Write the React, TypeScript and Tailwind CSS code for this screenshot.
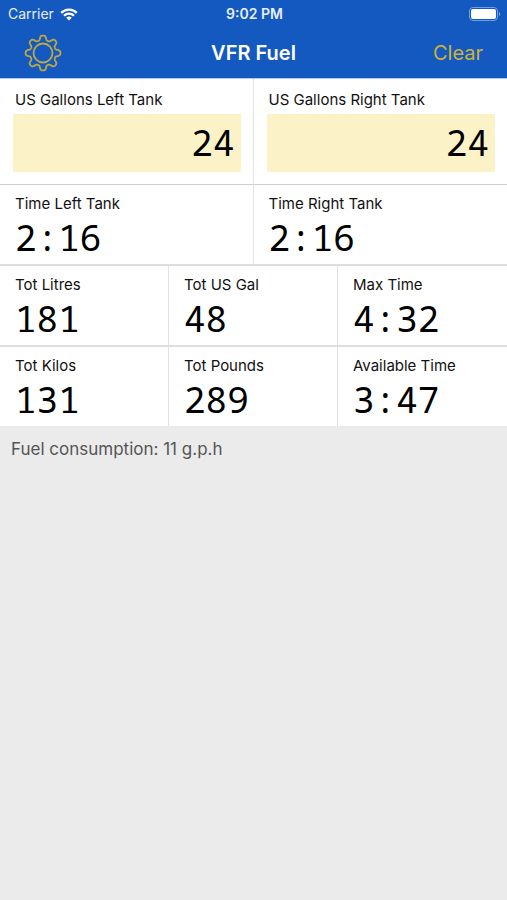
import { useState } from "react";

const sans = "font-['Inter','Liberation_Sans',sans-serif]";
const mono = "font-['Noto_Sans_Mono','DejaVu_Sans_Mono','Liberation_Mono',monospace]";

const TEETH = 8;

function gearPath() {
  const points: string[] = [];
  for (let i = 0; i < 240; i++) {
    const a = (i / 240) * Math.PI * 2;
    const r = 15.2 + 2.4 * Math.tanh(1.7 * Math.cos(TEETH * a));
    points.push(`${(19 + r * Math.sin(a)).toFixed(2)} ${(19 - r * Math.cos(a)).toFixed(2)}`);
  }
  return `M${points.join("L")}Z`;
}

function GearIcon() {
  return (
    <svg viewBox="0 0 38 38" className="size-[38px]" fill="none" stroke="currentColor" strokeWidth="1.8" strokeLinejoin="round" aria-hidden="true">
      <path d={gearPath()} />
      <circle cx="19" cy="19" r="9.5" />
    </svg>
  );
}

function WifiIcon() {
  return (
    <svg viewBox="0 0 18 13" className="h-[13px] w-[18px]" fill="none" stroke="white" strokeWidth="2.2" aria-label="Wi-Fi">
      <path d="M1.2 4.9a11 11 0 0 1 15.6 0" />
      <path d="M4 7.8a7 7 0 0 1 10 0" />
      <path d="M9 12.6 6.2 9.8a4 4 0 0 1 5.6 0Z" fill="white" stroke="none" />
    </svg>
  );
}

function BatteryIcon() {
  return (
    <svg viewBox="0 0 32 14" className="h-[14px] w-8" aria-label="Battery full">
      <rect x="0.5" y="0.5" width="28" height="13" rx="3.5" fill="none" stroke="#6f9ee6" />
      <rect x="2" y="2" width="25" height="10" rx="2" fill="white" />
      <path d="M30 5v4a2.4 2.4 0 0 0 0-4Z" fill="#8fb3ea" />
    </svg>
  );
}

function TankInput({ id, label, initial }: { id: string; label: string; initial: string }) {
  const [value, setValue] = useState(initial);
  return (
    <div className="flex min-w-0 flex-col gap-1 pt-[11px] pr-3 pb-3 pl-[13px]">
      <label htmlFor={id} className="pl-0.5 text-[15px] leading-5">
        {label}
      </label>
      <input
        id={id}
        inputMode="numeric"
        value={value}
        onChange={(e) => setValue(e.target.value)}
        className={`h-[58px] w-full min-w-0 bg-[#fbf3c7] px-1.5 text-right text-[36px] leading-[58px] text-black outline-none ${mono}`}
      />
    </div>
  );
}

function Reading({ label, value }: { label: string; value: string }) {
  return (
    <div className="min-w-0 pt-[9px] pb-0.5 pl-[15px]">
      <dt className="text-[15px] leading-5 whitespace-nowrap">{label}</dt>
      <dd className={`text-[36px] leading-[48px] text-black ${mono}`}>{value}</dd>
    </div>
  );
}

export default function App() {
  return (
    <div className={`min-h-screen bg-[#ebebeb] text-[#111] ${sans}`}>
      <header className="border-b border-[#a9c8f5] bg-[#1459bf] text-white">
        <div className="grid h-7 grid-cols-3 items-center pr-1.5 pl-2 text-[#e6effc]">
          <div className="flex items-center gap-1.5 text-sm">
            Carrier <WifiIcon />
          </div>
          <div className="text-center text-sm font-semibold">9:02 PM</div>
          <div className="flex justify-end">
            <BatteryIcon />
          </div>
        </div>
        <nav className="grid h-[50px] grid-cols-3 items-center px-6 text-xl">
          <button type="button" aria-label="Settings" className="justify-self-start text-[#bda845]">
            <GearIcon />
          </button>
          <h1 className="text-center font-semibold">VFR Fuel</h1>
          <button type="button" className="justify-self-end text-[#cdb13b]">
            Clear
          </button>
        </nav>
      </header>
      <main>
        <form className="grid grid-cols-2 divide-x divide-[#e2e2e2] border-b border-[#cfcfcf] bg-white">
          <TankInput id="left-tank" label="US Gallons Left Tank" initial="24" />
          <TankInput id="right-tank" label="US Gallons Right Tank" initial="24" />
        </form>
        <dl className="grid grid-cols-2 divide-x divide-[#e2e2e2] bg-white">
          <Reading label="Time Left Tank" value="2:16" />
          <Reading label="Time Right Tank" value="2:16" />
        </dl>
        <dl className="grid grid-cols-3 divide-x divide-[#e2e2e2] border-t-2 border-[#dedede] bg-white">
          <Reading label="Tot Litres" value="181" />
          <Reading label="Tot US Gal" value="48" />
          <Reading label="Max Time" value="4:32" />
        </dl>
        <dl className="grid grid-cols-3 divide-x divide-[#e2e2e2] border-t-2 border-[#dedede] bg-white">
          <Reading label="Tot Kilos" value="131" />
          <Reading label="Tot Pounds" value="289" />
          <Reading label="Available Time" value="3:47" />
        </dl>
        <p className="px-[11px] py-[11px] text-[17px] leading-6 text-[#555]">Fuel consumption: 11 g.p.h</p>
      </main>
    </div>
  );
}
